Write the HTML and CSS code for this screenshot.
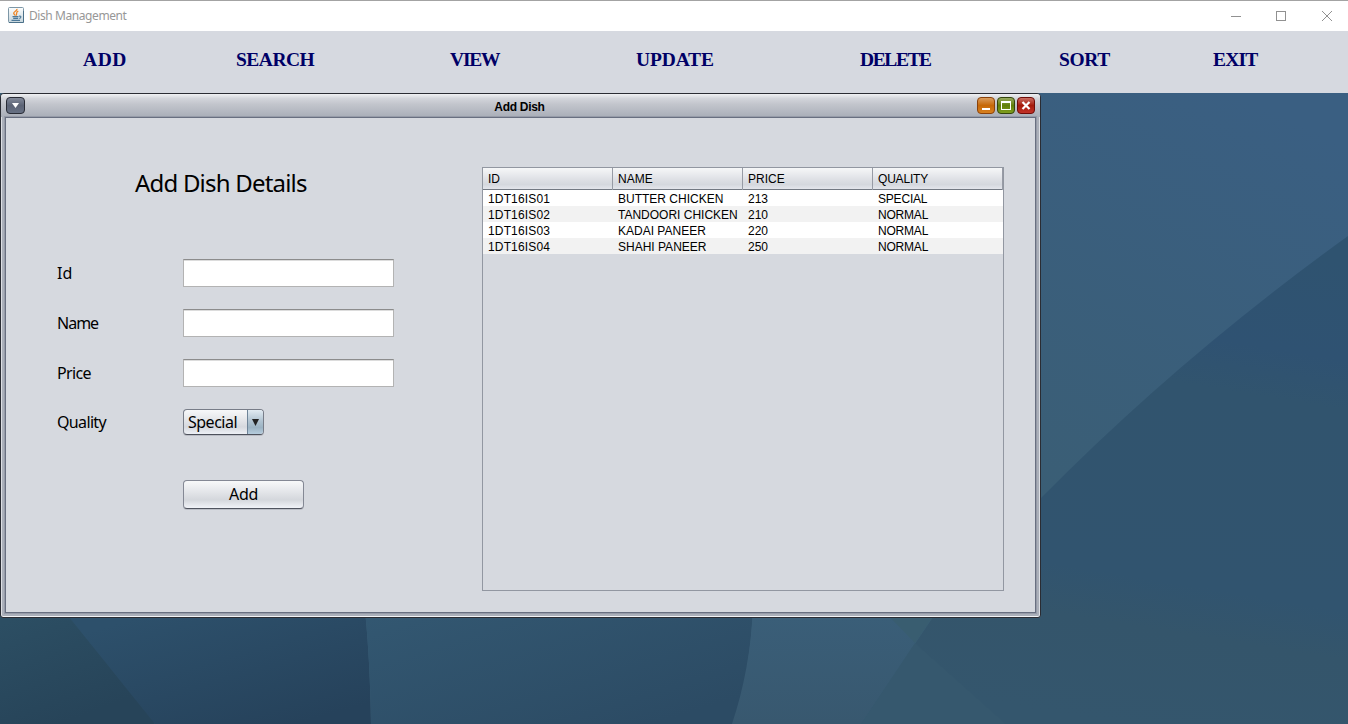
FILE: index.html
```html
<!DOCTYPE html>
<html lang="en">
<head>
<meta charset="utf-8">
<title>Dish Management</title>
<link rel="stylesheet" href="styles.css">
</head>
<body>
<div class="app">
  <header class="titlebar">
    <svg class="app-icon" width="16" height="16" viewBox="0 0 16 16">
      <defs><linearGradient id="ji" x2="0" y2="1"><stop offset="0" stop-color="#fdfefe"/><stop offset="1" stop-color="#c6d5dc"/></linearGradient></defs>
      <rect x=".5" y=".5" width="15" height="15" rx="1" fill="url(#ji)" stroke="#7d97a7"/>
      <path d="M1 15.500h14.500V4" fill="none" stroke="#4b7089"/>
      <path d="M9 1.800C9.500 4 5.400 4.300 5.700 6.300 5.900 7.300 7 7.700 7.100 8.800M10.300 4.200C7.200 5.300 9.600 6.600 8 8.500" fill="none" stroke="#ee8524" stroke-width="1.300"/>
      <path d="M4.500 9.600h6M5.200 11.400h5M3.500 13.400h8.500M11 9.300c2.600-1 2.400 1.700.3 2.200" fill="none" stroke="#4d7898" stroke-width="1.100"/>
    </svg>
    <span class="app-title">Dish Management</span>
    <svg class="win-controls" width="104" height="12" viewBox="0 0 104 12" fill="none" stroke="#919191">
      <path d="M1 6.500h10"/><rect x="46.500" y="1.500" width="9" height="9"/><path d="M92 1l10 10M102 1L92 11"/>
    </svg>
  </header>
  <nav class="menu">
    <a class="m-add">ADD</a><a class="m-search">SEARCH</a><a class="m-view">VIEW</a><a class="m-update">UPDATE</a><a class="m-delete">DELETE</a><a class="m-sort">SORT</a><a class="m-exit">EXIT</a>
  </nav>
  <main class="desktop">
    <svg class="wallpaper" width="1348" height="631" viewBox="0 93 1348 631">
      <defs>
        <linearGradient id="w1" gradientUnits="userSpaceOnUse" x1="1041" y1="500" x2="1240" y2="93"><stop offset="0" stop-color="#3a5e75"/><stop offset="1" stop-color="#3a5f82"/></linearGradient>
        <linearGradient id="w2" gradientUnits="userSpaceOnUse" x1="1200" y1="236" x2="1120" y2="724"><stop offset="0" stop-color="#2f5370"/><stop offset=".2" stop-color="#2f5272"/><stop offset=".3" stop-color="#31546e"/><stop offset=".7" stop-color="#31546f"/><stop offset=".8" stop-color="#34556b"/><stop offset="1" stop-color="#34566d"/></linearGradient>
        <linearGradient id="w3" gradientUnits="userSpaceOnUse" x1="20" y1="617" x2="60" y2="724"><stop offset="0" stop-color="#2c4e63"/><stop offset="1" stop-color="#274459"/></linearGradient>
        <linearGradient id="w4" gradientUnits="userSpaceOnUse" x1="200" y1="600" x2="240" y2="740"><stop offset="0" stop-color="#2d506b"/><stop offset="1" stop-color="#26425b"/></linearGradient>
        <linearGradient id="w5" gradientUnits="userSpaceOnUse" x1="480" y1="570" x2="540" y2="760"><stop offset="0" stop-color="#335872"/><stop offset="1" stop-color="#2c4b64"/></linearGradient>
        <linearGradient id="w6" gradientUnits="userSpaceOnUse" x1="0" y1="617" x2="0" y2="724"><stop offset="0" stop-color="#3a5e78"/><stop offset="1" stop-color="#38586f"/></linearGradient>
      </defs>
      <rect y="93" width="1348" height="631" fill="url(#w1)"/>
      <path d="M1348 236Q1180 357 1041 498L933 617L861 724H1348Z" fill="url(#w2)"/>
      <path d="M0 610H100L155 724H0Z" fill="url(#w3)"/>
      <path d="M69 617L155 724H371Q370 660 365 610H69Z" fill="url(#w4)"/>
      <path d="M365 610Q370 660 371 724H735Q750 670 753 610Z" fill="url(#w5)"/>
      <path d="M753 610Q750 670 732 724H861L915 643L937 610Z" fill="url(#w6)"/>
      <path d="M883 610H937L915 643Z" fill="#395d70"/>
      <path d="M915 643L1006 724H861Z" fill="#36586e"/>
    </svg>
    <section class="frame">
      <div class="frame-title">
        <svg class="frame-menu" width="20" height="18" viewBox="0 0 20 18">
          <defs><linearGradient id="g0" x2="0" y2="1"><stop offset="0" stop-color="#858c9c"/><stop offset=".5" stop-color="#5c6476"/><stop offset="1" stop-color="#687184"/></linearGradient></defs>
          <rect x=".5" y=".5" width="18" height="16" rx="3.500" fill="url(#g0)" stroke="#292c36"/><path d="M6 6h7L9.500 11Z" fill="#fff"/>
        </svg>
        <h2>Add Dish</h2>
        <svg class="frame-buttons" width="60" height="18" viewBox="0 0 60 18">
          <defs>
            <linearGradient id="g1" x2="0" y2="1"><stop offset="0" stop-color="#dba064"/><stop offset=".5" stop-color="#c66808"/><stop offset="1" stop-color="#d98221"/></linearGradient>
            <linearGradient id="g2" x2="0" y2="1"><stop offset="0" stop-color="#9bad66"/><stop offset=".5" stop-color="#607f08"/><stop offset="1" stop-color="#81a020"/></linearGradient>
            <linearGradient id="g3" x2="0" y2="1"><stop offset="0" stop-color="#cc7268"/><stop offset=".5" stop-color="#a51a0b"/><stop offset="1" stop-color="#c4342a"/></linearGradient>
          </defs>
          <rect x=".5" y=".5" width="17" height="16" rx="3.500" fill="url(#g1)" stroke="#8a420b"/><path d="M5 12h8" stroke="#fff" stroke-width="2"/>
          <rect x="20.500" y=".5" width="17" height="16" rx="3.500" fill="url(#g2)" stroke="#34450c"/><rect x="24.500" y="4.500" width="9" height="8" fill="none" stroke="#fff"/><path d="M24 5h10" stroke="#fff" stroke-width="2"/>
          <rect x="40.500" y=".5" width="17" height="16" rx="3.500" fill="url(#g3)" stroke="#6e0c08"/><path d="M45.500 5l7 7M52.500 5l-7 7" stroke="#fff" stroke-width="2.200"/>
        </svg>
      </div>
      <div class="frame-content">
        <form class="dish-form">
          <h1>Add Dish Details</h1>
          <label class="row"><span class="l-id">Id</span><input type="text"></label>
          <label class="row"><span class="l-name">Name</span><input type="text"></label>
          <label class="row"><span class="l-price">Price</span><input type="text"></label>
          <div class="row quality"><span class="l-quality">Quality</span>
            <div class="combo"><span class="combo-value">Special</span><span class="combo-arrow"><svg width="7" height="7" viewBox="0 0 7 7"><path d="M0 0h7L3.500 7Z" fill="#222"/></svg></span></div>
          </div>
          <button type="button" class="add-button">Add</button>
        </form>
        <div class="table-pane">
          <table>
            <thead><tr><th>ID</th><th>NAME</th><th>PRICE</th><th>QUALITY</th></tr></thead>
            <tbody>
              <tr><td>1DT16IS01</td><td>BUTTER CHICKEN</td><td>213</td><td>SPECIAL</td></tr>
              <tr><td>1DT16IS02</td><td>TANDOORI CHICKEN</td><td>210</td><td>NORMAL</td></tr>
              <tr><td>1DT16IS03</td><td>KADAI PANEER</td><td>220</td><td>NORMAL</td></tr>
              <tr><td>1DT16IS04</td><td>SHAHI PANEER</td><td>250</td><td>NORMAL</td></tr>
            </tbody>
          </table>
        </div>
      </div>
    </section>
  </main>
</div>
</body>
</html>
```
FILE: styles.css
```css
* { box-sizing: border-box; }
body { margin: 0; overflow: hidden; color: #000; font-family: "Noto Sans", sans-serif; }
.app { width: 1348px; height: 724px; display: flex; flex-direction: column; }

.titlebar { height: 31px; flex: none; display: flex; align-items: center; background: #fff; border-top: 1px solid #a3a3a3; padding: 0 14px 1px 8px; }
.app-icon { margin-bottom: 1px; }
.app-title { margin-left: 5px; font-size: 12px; letter-spacing: -0.42px; line-height: 16px; color: #979797; }
.win-controls { margin-left: auto; }

.menu { height: 62px; flex: none; display: grid; grid-template-columns: 153px 214px 186px 224px 199px 154px 60px; padding: 17px 0 0 83px; background: #d6d9e0; font: bold 19.5px/24px "Liberation Serif", serif; color: #000066; }
.m-add { letter-spacing: 0.6px; }
.m-search { letter-spacing: -0.5px; }
.m-view { letter-spacing: -1.2px; }
.m-update { letter-spacing: -0.15px; }
.m-delete { letter-spacing: -1.4px; }
.m-sort { letter-spacing: -0.4px; }
.m-exit { letter-spacing: -0.8px; }

.desktop { flex: 1; position: relative; background: #34566d; }
.wallpaper { position: absolute; left: 0; top: 0; }

.frame { position: relative; width: 1041px; height: 525px; border: 1px solid #2a2c33; border-radius: 4px 4px 3px 3px; background: #abb0ba; box-shadow: inset 1px 0 #dcdee3, inset -1px 0 #dcdee3, inset 0 -1px #f2f3f5; padding: 0 4px 4px; }
.frame-title { height: 23px; margin: 0 -4px; padding: 0 3px 0 5px; display: flex; align-items: center; border-radius: 3px 3px 0 0; background: linear-gradient(#f0f1f3, #d2d4da 20%, #c2c5cc 45%, #a9aeb8); }
.frame-menu, .frame-buttons { flex: none; }
.frame-title h2 { margin: 3px 0 0; flex: 1; padding-left: 36px; text-align: center; font: bold 12px/16px "Liberation Sans", sans-serif; letter-spacing: -0.3px; }
.frame-content { height: 496px; border: 1px solid #686f80; box-shadow: 0 0 0 1px #969ba8; background: #d6d9df; display: grid; grid-template-columns: 476px 522px; }

.dish-form { padding: 47px 0 0 51px; font-size: 16px; }
.dish-form h1 { margin: 0 0 59px 78px; font-size: 24px; line-height: 35px; font-weight: 400; letter-spacing: -0.8px; white-space: nowrap; }
.row { display: grid; grid-template-columns: 126px 211px; height: 28px; margin-bottom: 22px; line-height: 28px; }
.row span { letter-spacing: -0.5px; }
.row .l-id { letter-spacing: 0; }
.row .l-name { letter-spacing: -1px; }
.row .l-price, .row .l-quality { letter-spacing: -0.65px; }
.row input { width: 211px; height: 28px; border: 1px solid #b3b3b3; border-top-color: #8c8c8c; background: #fff; box-shadow: inset 0 1px #dcdcdc; padding: 0 4px; }
.quality { margin-bottom: 43px; line-height: 27px; }
.combo { width: 81px; height: 26px; display: grid; grid-template-columns: 1fr 16px; border: 1px solid #787d88; border-bottom-color: #4d515b; border-radius: 4px; background: linear-gradient(#f7f8f9, #e2e4e8 45%, #d5d8de 70%, #edf0f5); box-shadow: 0 1px #b9bcc4; overflow: hidden; }
.combo-value { padding-left: 4px; line-height: 25px; }
.combo-arrow { display: grid; place-items: center; border-left: 1px solid #6e8498; background: linear-gradient(#e2ebf2, #afc2d0 45%, #9cb3c3 70%, #b9d0e1); }
.add-button { display: block; margin-left: 126px; width: 121px; height: 29px; padding: 0 0 1px; border: 1px solid #848894; border-bottom-color: #50545f; border-radius: 4px; background: linear-gradient(#f8f9fa, #e1e3e7 45%, #d4d7dc 70%, #f1f3f8); box-shadow: 0 1px #bbbec6; font: 16px/26px "Noto Sans", sans-serif; letter-spacing: -0.3px; color: #000; }

.table-pane { margin-top: 49px; width: 522px; height: 424px; border: 1px solid #9297a1; }
table { width: 520px; table-layout: fixed; border-collapse: collapse; font: 12px/16px "Liberation Sans", sans-serif; }
th, td { text-align: left; padding: 0 0 0 5px; font-weight: 400; white-space: nowrap; }
th { height: 22px; background: linear-gradient(#f6f7f8, #dfe1e6 50%, #d5d8de 75%, #e7e9ef); box-shadow: inset -1px 0 #979ba5, inset 0 -1px #737983; }
td { height: 16px; padding-top: 2px; line-height: 14px; background: #fff; }
td:first-child { letter-spacing: 0.15px; }
td:last-child, th:last-child { letter-spacing: -0.2px; }
tbody tr:nth-child(even) td { background: #f2f2f2; }
```
